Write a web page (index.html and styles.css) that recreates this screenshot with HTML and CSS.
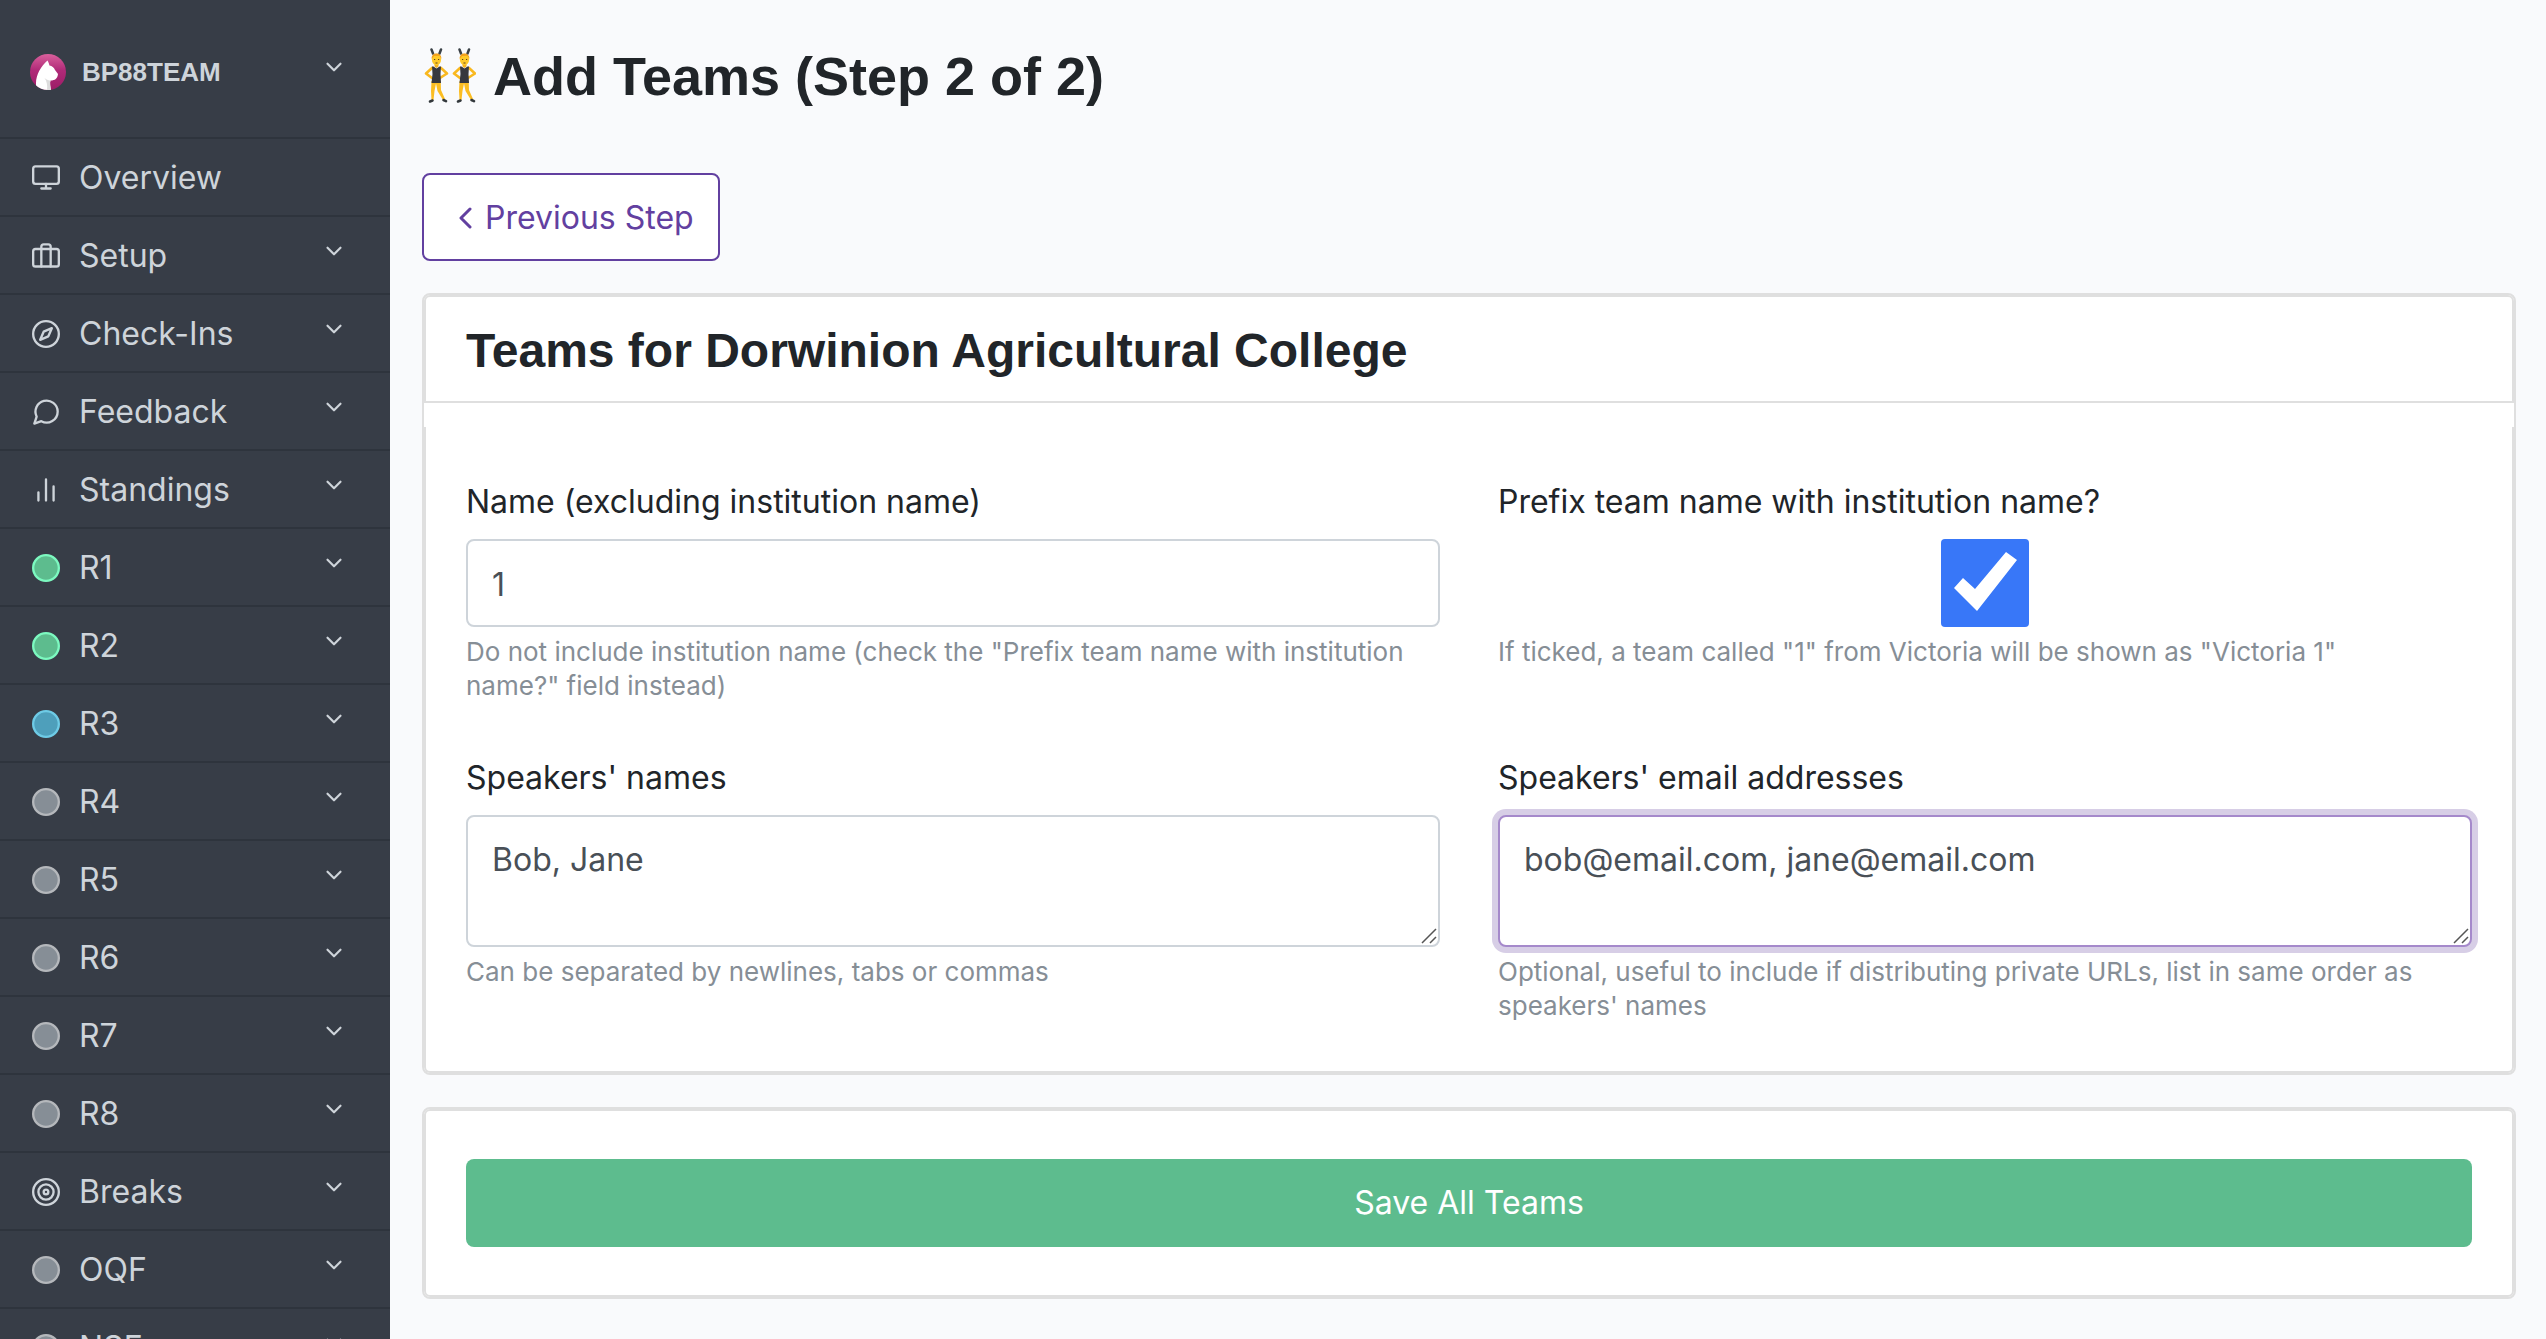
FILE: index.html
```html
<!DOCTYPE html>
<html lang="en">
<head>
<meta charset="utf-8">
<title>Add Teams</title>
<link rel="stylesheet" href="styles.css">
</head>
<body>
<svg class="defs" aria-hidden="true">
  <symbol id="down" viewBox="0 0 24 24"><path d="M6 9l6 6 6-6"/></symbol>
  <symbol id="dot" viewBox="0 0 24 24"><circle cx="12" cy="12" r="11"/></symbol>
</svg>
<nav class="sidebar">
  <a class="brand" href="#">
    <svg class="logo" viewBox="0 0 36 36" aria-hidden="true">
      <defs>
        <linearGradient id="pink" x1="0" y1="0" x2="0" y2="1"><stop offset="0" stop-color="#d9609c"/><stop offset=".45" stop-color="#b02a78"/><stop offset="1" stop-color="#9c1c66"/></linearGradient>
        <clipPath id="round"><circle cx="18" cy="18" r="18"/></clipPath>
      </defs>
      <g clip-path="url(#round)">
        <rect width="36" height="36" fill="url(#pink)"/>
        <path fill="#fff" d="M6 36V29C6 21 11 12 17.500 6.500C18.500 8 19 10 19.500 11.500C22 12 24 13.500 25 16L28 20C27.500 24.500 25 26.500 20.500 26.500C19.500 29 20.500 33 21 36Z"/>
        <path fill="#ddd" d="M14.500 24C17 26 19 26.500 20.500 26.500C19.500 29 20.500 33 21 36H17C17.500 32 17 27 14.500 24Z"/>
      </g>
    </svg>
    <span class="brand-name">BP88TEAM</span>
    <svg class="arrow"><use href="#down"/></svg>
  </a>
  <a class="item" href="#"><svg class="icon" viewBox="0 0 24 24"><rect x="1" y="2" width="22" height="15" rx="2"/><path d="M8 21h8M12 17v4"/></svg><span>Overview</span></a>
  <a class="item" href="#"><svg class="icon" viewBox="0 0 24 24"><rect x="1" y="6" width="22" height="15" rx="2"/><path d="M16 21V4a2 2 0 0 0-2-2h-4a2 2 0 0 0-2 2v17"/></svg><span>Setup</span><svg class="arrow"><use href="#down"/></svg></a>
  <a class="item" href="#"><svg class="icon" viewBox="0 0 24 24"><circle cx="12" cy="12" r="11"/><path d="M17 7l-3 7-7 3 3-7z"/></svg><span>Check-Ins</span><svg class="arrow"><use href="#down"/></svg></a>
  <a class="item" href="#"><svg class="icon" viewBox="0 0 24 24"><path d="M22 11.500a9.500 9.500 0 0 1-14 8.400L2 22l2-6a9.500 9.500 0 1 1 18-4.500z"/></svg><span>Feedback</span><svg class="arrow"><use href="#down"/></svg></a>
  <a class="item" href="#"><svg class="icon" viewBox="0 0 24 24"><path d="M18.500 21V9M12 21V3M5.500 21v-7"/></svg><span>Standings</span><svg class="arrow"><use href="#down"/></svg></a>
  <a class="item" href="#"><svg class="icon done"><use href="#dot"/></svg><span>R1</span><svg class="arrow"><use href="#down"/></svg></a>
  <a class="item" href="#"><svg class="icon done"><use href="#dot"/></svg><span>R2</span><svg class="arrow"><use href="#down"/></svg></a>
  <a class="item" href="#"><svg class="icon current"><use href="#dot"/></svg><span>R3</span><svg class="arrow"><use href="#down"/></svg></a>
  <a class="item" href="#"><svg class="icon future"><use href="#dot"/></svg><span>R4</span><svg class="arrow"><use href="#down"/></svg></a>
  <a class="item" href="#"><svg class="icon future"><use href="#dot"/></svg><span>R5</span><svg class="arrow"><use href="#down"/></svg></a>
  <a class="item" href="#"><svg class="icon future"><use href="#dot"/></svg><span>R6</span><svg class="arrow"><use href="#down"/></svg></a>
  <a class="item" href="#"><svg class="icon future"><use href="#dot"/></svg><span>R7</span><svg class="arrow"><use href="#down"/></svg></a>
  <a class="item" href="#"><svg class="icon future"><use href="#dot"/></svg><span>R8</span><svg class="arrow"><use href="#down"/></svg></a>
  <a class="item" href="#"><svg class="icon" viewBox="0 0 24 24"><circle cx="12" cy="12" r="11"/><circle cx="12" cy="12" r="6.500"/><circle cx="12" cy="12" r="2"/></svg><span>Breaks</span><svg class="arrow"><use href="#down"/></svg></a>
  <a class="item" href="#"><svg class="icon future"><use href="#dot"/></svg><span>OQF</span><svg class="arrow"><use href="#down"/></svg></a>
  <a class="item" href="#"><svg class="icon future"><use href="#dot"/></svg><span>NSF</span><svg class="arrow"><use href="#down"/></svg></a>
</nav>
<main class="main">
  <h1 class="title">
    <svg class="emoji" viewBox="0 0 54 56" role="img" aria-label="People with bunny ears">
      <defs>
        <g id="dancer">
          <path d="M9.500 1.500l1.500 4M19 1.500l-1.500 4" stroke="#3a4146" stroke-width="2.500" stroke-linecap="round"/>
          <path d="M10 20L4 25.500L10 30M19 20L25 25.500L18 30" fill="none" stroke="#f9b81f" stroke-width="2.600" stroke-linecap="round" stroke-linejoin="round"/>
          <path d="M9.500 33h5L12.500 43L11.500 52H9.500L9 43Z" fill="#fbbd22"/>
          <path d="M13.500 33h5.200L19 42L23 51L21 52L15.500 43Z" fill="#fbbd22"/>
          <path d="M8 53.500l2.500-1M21.500 52l2.500 1.200" stroke="#33383c" stroke-width="2.600" stroke-linecap="round"/>
          <path d="M10 18.500h1.500l3 2 3-2H19L18.500 26L19 35H9.500L10.500 26Z" fill="#37383e"/>
          <path d="M12.500 15h4v3.500l-2 1.500-2-1.500z" fill="#f5b21c"/>
          <ellipse cx="14.500" cy="11.500" rx="4.600" ry="5.800" fill="#ffca28"/>
          <path d="M9.700 11C8.500 3.500 20.500 3.500 19.300 11L17.500 7.800L12 8Z" fill="#f3a01c"/>
          <path d="M12 11.500h1.200M16 11.500h1.200M13.500 15h2" stroke="#5d4020"/>
        </g>
      </defs>
      <use href="#dancer"/><use href="#dancer" x="28"/>
    </svg>
    <span>Add Teams (Step 2 of 2)</span>
  </h1>
  <a class="previous" href="#"><svg class="back" viewBox="0 0 14 24" aria-hidden="true"><path d="M11 3l-9 9 9 9"/></svg>Previous Step</a>
  <form class="form">
    <section class="card">
      <h2 class="card-head">Teams for Dorwinion Agricultural College</h2>
      <div class="card-fields">
        <div class="field">
          <label for="name">Name (excluding institution name)</label>
          <input class="control" id="name" type="text" value="1">
          <p class="help">Do not include institution name (check the "Prefix team name with institution name?" field instead)</p>
        </div>
        <div class="field">
          <label for="prefix">Prefix team name with institution name?</label>
          <input class="tick" id="prefix" type="checkbox" checked>
          <p class="help">If ticked, a team called "1" from Victoria will be shown as "Victoria 1"</p>
        </div>
        <div class="field">
          <label for="speakers">Speakers' names</label>
          <textarea class="control area" id="speakers">Bob, Jane</textarea>
          <p class="help">Can be separated by newlines, tabs or commas</p>
        </div>
        <div class="field">
          <label for="emails">Speakers' email addresses</label>
          <textarea class="control area active" id="emails" spellcheck="false">bob@email.com, jane@email.com</textarea>
          <p class="help">Optional, useful to include if distributing private URLs, list in same order as speakers' names</p>
        </div>
      </div>
    </section>
    <section class="card">
      <div class="card-save"><button class="save" type="submit">Save All Teams</button></div>
    </section>
  </form>
</main>
</body>
</html>
```
FILE: styles.css
```css
* { box-sizing: border-box; }
body {
  margin: 0;
  display: flex;
  height: 100vh;
  overflow: hidden;
  background: #f9fafc;
  color: #212529;
  font: 400 32px/48px Inter, "Liberation Sans", sans-serif;
}
a { color: inherit; text-decoration: none; }
.defs { position: absolute; width: 0; height: 0; }

.sidebar {
  flex: 0 0 390px;
  overflow: hidden;
  background: #373d47;
  color: #ced4da;
}
.brand, .item {
  display: flex;
  align-items: center;
  padding: 2px 43px 0 32px;
  border-bottom: 2px solid #2e343d;
}
.brand { height: 139px; padding-top: 6px; padding-left: 30px; }
.item { height: 78px; }
.logo { width: 36px; height: 36px; margin-right: 16px; }
.brand-name { font: 700 26px/40px "Liberation Sans", sans-serif; }
.icon {
  width: 28px;
  height: 28px;
  margin-right: 19px;
}
.icon, .arrow {
  fill: none;
  stroke: currentColor;
  stroke-width: 2;
  stroke-linecap: round;
  stroke-linejoin: round;
}
.arrow { width: 26px; height: 26px; margin-left: auto; margin-bottom: 10px; }
.done { fill: #5dbc8e; stroke: #7cf9c0; }
.current { fill: #4e9fbb; stroke: #6ecbe6; }
.future { fill: #868e96; stroke: #b5b8bc; }

.main { flex: 1; min-width: 0; padding: 40px 30px 40px 32px; }
.title {
  display: flex;
  align-items: center;
  gap: 17px;
  height: 72px;
  margin: 0 0 61px;
  font: 700 54px/72px "Liberation Sans", sans-serif;
}
.emoji { width: 54px; height: 56px; }
.previous {
  display: inline-flex;
  align-items: center;
  height: 88px;
  padding: 2px 24px 0 35px;
  border: 2px solid #6240a0;
  border-radius: 8px;
  background: #fff;
  color: #6240a0;
}
.back {
  width: 14px;
  height: 24px;
  margin-right: 12px;
  fill: none;
  stroke: currentColor;
  stroke-width: 3;
  stroke-linecap: round;
  stroke-linejoin: round;
}
.form { display: grid; gap: 32px; margin-top: 32px; }
.card { border: 2px solid #dfdfdf; border-radius: 8px; background: #fff; }
.card-head {
  margin: 0;
  height: 108px;
  padding: 0 40px;
  border: 2px solid #dfdfdf;
  border-radius: 6px 6px 0 0;
  font: 700 48px/108px "Liberation Sans", sans-serif;
}
.card-fields {
  display: grid;
  grid-template-columns: 1fr 1fr;
  gap: 51px 58px;
  margin-top: 24px;
  padding: 51px 40px 48px;
  border: 2px solid #dfdfdf;
  border-top: 0;
  border-radius: 0 0 6px 6px;
}
.card-save { padding: 48px 40px; border: 2px solid #dfdfdf; border-radius: 6px; }
.field { display: flex; flex-direction: column; min-width: 0; }
.field label { margin-bottom: 13px; }
.control {
  display: block;
  width: 100%;
  height: 88px;
  padding: 19px 24px 17px;
  border: 2px solid #ced4da;
  border-radius: 8px;
  background: #fff;
  color: #495057;
  font: inherit;
  outline: 0;
}
.area {
  height: 132px;
  resize: vertical;
  overflow: hidden;
  background: #fff url("data:image/svg+xml,%3Csvg xmlns='http://www.w3.org/2000/svg' width='16' height='16'%3E%3Cpath d='M1 15L15 1M9 15L15 9' stroke='%23555' stroke-width='1.500'/%3E%3C/svg%3E") no-repeat right 1px bottom 1px;
}
.area::-webkit-resizer { background: transparent; }
.active { border-color: #a589cb; box-shadow: 0 0 0 6px #d7cee6; }
.tick {
  appearance: none;
  align-self: center;
  width: 88px;
  height: 88px;
  margin: 0;
  border-radius: 4px;
  background: #3877f8;
}
.tick::before {
  content: "";
  display: block;
  height: 100%;
  background: #fff;
  clip-path: polygon(13px 49px, 22px 39px, 34px 50px, 65px 13px, 76px 21px, 36px 72px);
}
.help { margin: 8px 0 0; color: #868e96; font-size: 26px; line-height: 34px; }
.save {
  display: block;
  width: 100%;
  height: 88px;
  border: 0;
  border-radius: 8px;
  background: #5dbc8e;
  color: #fff;
  font: inherit;
}
```
